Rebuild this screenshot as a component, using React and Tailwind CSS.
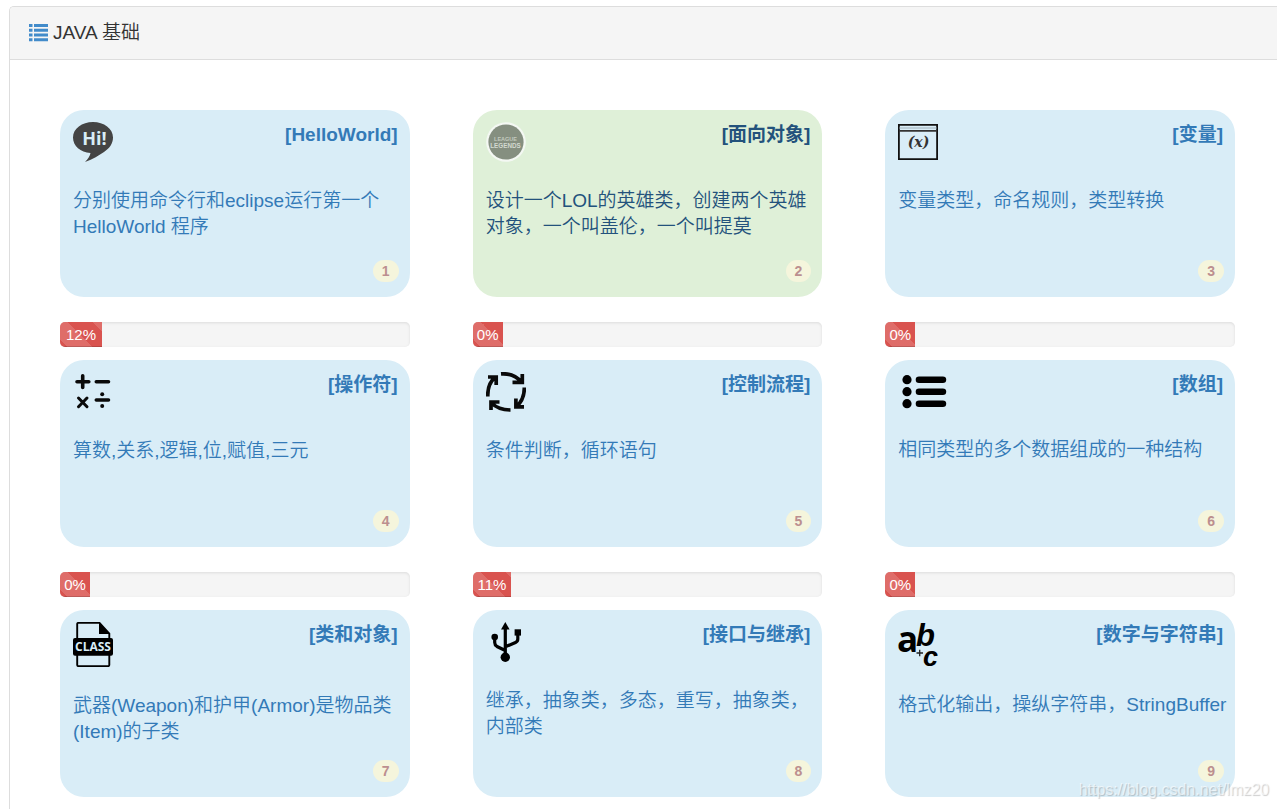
import React from 'react';
import clsx from 'clsx';

const HelloIcon = () => (
  <svg width="40" height="40" viewBox="0 0 40 40" aria-hidden="true">
    <path d="M20 0C31 0 40 6.600 40 15.500C40 21.500 36.500 26.500 31 30C26 33.500 20 37 12 40C15 37 17 34 17.500 31C7.500 30.200 0 24 0 15.500C0 6.600 9 0 20 0Z" fill="#444" />
    <text x="21.500" y="22.500" textAnchor="middle" fontFamily="Open Sans, sans-serif" fontWeight="700" fontSize="18" fill="#d9edf7">Hi!</text>
  </svg>
);

const LegendsIcon = () => (
  <svg width="40" height="40" viewBox="0 0 40 40" aria-hidden="true">
    <circle cx="20" cy="20" r="19.800" fill="#f4f8f3" />
    <circle cx="20" cy="20" r="17.600" fill="#858f80" />
    <text x="19.500" y="19" textAnchor="middle" fontFamily="Liberation Sans, sans-serif" fontWeight="700" fontSize="5.500" fill="#c3cabf">LEAGUE</text>
    <text x="19.500" y="25.500" textAnchor="middle" fontFamily="Liberation Sans, sans-serif" fontWeight="700" fontSize="6.300" fill="#d3d9d0">LEGENDS</text>
  </svg>
);

const VariableIcon = () => (
  <svg width="40" height="40" viewBox="0 0 40 40" fill="none" stroke="#111" aria-hidden="true">
    <path d="M0.900 2.900H39.100V37.200H0.900Z" strokeWidth="1.800" />
    <path d="M1 8.900H39" strokeWidth="1.800" stroke="#333" />
    <path d="M1 6H39" strokeWidth="0.800" stroke="#8fa0a8" />
    <text x="20.500" y="25" textAnchor="middle" fontFamily="DejaVu Serif, serif" fontStyle="italic" fontWeight="700" fontSize="14" fill="#333" stroke="none">(x)</text>
  </svg>
);

const OperatorIcon = () => (
  <svg width="40" height="40" viewBox="0 0 40 40" fill="none" stroke="#0a0a0a" strokeWidth="3.600" strokeLinecap="round" aria-hidden="true">
    <path d="M4 9.700H15.800M9.700 3.800V15.500M23.300 9.700H35.500M23.300 28H35.500" />
    <path d="M5.500 26L14 34.700M14 26L5.500 34.700" strokeWidth="3" />
    <circle cx="29.200" cy="22.200" r="2" fill="#0a0a0a" stroke="none" />
    <circle cx="29.200" cy="34" r="2" fill="#0a0a0a" stroke="none" />
  </svg>
);

const CycleIcon = () => (
  <svg width="40" height="40" viewBox="0 0 40 40" fill="none" stroke="#0a0a0a" strokeWidth="3.700" aria-hidden="true">
    <path d="M15 1.900C23 1.200 30 4 35.500 10M36.300 2V10.400H26.500" />
    <path d="M38.300 15.500C38.500 24 35.500 30 30.500 34.500M29.900 26.500V34.900H38" />
    <path d="M24.500 38C17 38 10 35.500 5.500 31M5 38V30H13.500" />
    <path d="M1.800 24.500C1.500 17 4 9.500 9.500 5M2 5H10.200V13" />
  </svg>
);

const ArrayIcon = () => (
  <svg width="50" height="39" viewBox="0 0 50 39" aria-hidden="true">
    <g fill="#000">
      <circle cx="9" cy="7.700" r="4.600" />
      <circle cx="9" cy="19.700" r="4.600" />
      <circle cx="9" cy="31.700" r="4.600" />
      <rect x="17.700" y="4.400" width="30.500" height="6.600" rx="3.300" />
      <rect x="17.700" y="16.400" width="30.500" height="6.600" rx="3.300" />
      <rect x="17.700" y="28.400" width="30.500" height="6.600" rx="3.300" />
    </g>
  </svg>
);

const ClassIcon = () => (
  <svg width="40" height="45" viewBox="0 0 40 45" aria-hidden="true">
    <path d="M4.200 17V2Q4.200 0.900 5.300 0.900H26.500L36.300 11.500V17M4.200 33V43Q4.200 44.100 5.300 44.100H35.200Q36.300 44.100 36.300 43V33" fill="none" stroke="#000" strokeWidth="1.900" />
    <path d="M26 0.500V12H37Z" fill="#000" />
    <rect y="16" width="40" height="17.800" rx="2" fill="#000" />
    <text x="20" y="29.200" textAnchor="middle" fontFamily="Open Sans, sans-serif" fontWeight="700" fontSize="12" fill="#d9edf7">CLASS</text>
  </svg>
);

const UsbIcon = () => (
  <svg width="40" height="40" viewBox="0 0 40 40" aria-hidden="true">
    <path d="M19.300 0L23.600 7.500H15Z" fill="#000" />
    <circle cx="19.300" cy="35.300" r="4.700" fill="#000" />
    <circle cx="8.700" cy="15" r="3.300" fill="#000" />
    <rect x="28.600" y="7.300" width="6.400" height="6.300" fill="#000" />
    <path d="M19.300 5V35M8.700 15V20.500Q8.700 23 11 24.500L19.300 28.500M31.800 13V17Q31.800 19.500 29.500 20.500L19.300 24.800" fill="none" stroke="#000" strokeWidth="3.200" />
  </svg>
);

const StringIcon = () => (
  <svg width="40" height="44" viewBox="0 0 40 44" className="overflow-visible" fontWeight="700" aria-hidden="true">
    <text x="-1" y="29.500" fontFamily="Open Sans, sans-serif" fontSize="35">a</text>
    <text x="18" y="23.500" fontFamily="Liberation Sans, sans-serif" fontStyle="italic" fontSize="31">b</text>
    <path d="M18.500 31H25M21.700 27.800V34.200" stroke="#222" strokeWidth="1.300" />
    <text x="25" y="43.500" fontFamily="Liberation Sans, sans-serif" fontStyle="italic" fontSize="27">c</text>
  </svg>
);

const TOPICS = [
  { id: 1, title: 'HelloWorld', text: '分别使用命令行和eclipse运行第一个HelloWorld 程序', icon: HelloIcon, progress: 12 },
  { id: 2, title: '面向对象', text: '设计一个LOL的英雄类，创建两个英雄对象，一个叫盖伦，一个叫提莫', icon: LegendsIcon, progress: 0, active: true },
  { id: 3, title: '变量', text: '变量类型，命名规则，类型转换', icon: VariableIcon, progress: 0 },
  { id: 4, title: '操作符', text: '算数,关系,逻辑,位,赋值,三元', icon: OperatorIcon, progress: 0 },
  { id: 5, title: '控制流程', text: '条件判断，循环语句', icon: CycleIcon, progress: 11 },
  { id: 6, title: '数组', text: '相同类型的多个数据组成的一种结构', icon: ArrayIcon, progress: 0 },
  { id: 7, title: '类和对象', text: '武器(Weapon)和护甲(Armor)是物品类(Item)的子类', icon: ClassIcon },
  { id: 8, title: '接口与继承', text: '继承，抽象类，多态，重写，抽象类，内部类', icon: UsbIcon },
  { id: 9, title: '数字与字符串', text: '格式化输出，操纵字符串，StringBuffer', icon: StringIcon },
];

const TopicCard = ({ topic }) => {
  const Icon = topic.icon;
  return (
    <a
      href={`#topic-${topic.id}`}
      className={clsx(
        'flex min-h-[187px] flex-col rounded-3xl pt-3 pb-[15px] pl-[13px]',
        topic.active ? 'bg-[#dff0d8] text-[#23527c]' : 'bg-[#d9edf7] text-[#337ab7]'
      )}
    >
      <div className="flex items-start justify-between pr-3">
        <Icon />
        <h2 className="font-bold">[{topic.title}]</h2>
      </div>
      <p className="mt-[26px] pr-[7px] font-[350]">{topic.text}</p>
      <span className="mt-auto mr-[11px] self-end rounded-xl bg-[#f5f5dc] px-[9px] text-sm leading-[22px] font-bold text-[#bc8f8f]">
        {topic.id}
      </span>
    </a>
  );
};

const ProgressBar = ({ value, label }) => (
  <div className="mt-[25px] mb-[13px] h-[25px] overflow-hidden rounded-[5px] bg-[#f5f5f5] shadow-[inset_0_1px_3px_rgba(0,0,0,0.1)]">
    <div
      role="progressbar"
      aria-label={label}
      aria-valuenow={value}
      aria-valuemin={0}
      aria-valuemax={100}
      className="h-full min-w-[30px] bg-[#d9534f] bg-[linear-gradient(45deg,rgba(255,255,255,0.15)_25%,transparent_25%,transparent_50%,rgba(255,255,255,0.15)_50%,rgba(255,255,255,0.15)_75%,transparent_75%,transparent)] bg-[length:50px_50px] bg-[position:-17px_0px] text-center text-[15px] leading-[25px] text-white shadow-[inset_0_-1px_0_rgba(0,0,0,0.15)]"
      style={{ width: `${value}%` }}
    >
      {value}%
    </div>
  </div>
);

const App = () => {
  return (
    <div className="relative flex min-h-screen flex-col bg-white pt-1.5 pl-[9px] font-['Liberation_Sans','Noto_Sans_CJK_SC',sans-serif] text-[19px] leading-[26px]">
      <section className="flex-1 rounded-tl-[5px] border-t border-l border-[#ddd]">
        <header className="flex items-center gap-[5px] rounded-tl-[4px] border-b border-[#ddd] bg-[#f5f5f5] px-[19px] py-[13px] text-[#333]">
          <svg width="19" height="18" viewBox="0 0 19 18" fill="#428bca" aria-hidden="true">
            <path d="M0 0H3.500V3H0ZM5 0H19V3H5ZM0 4.800H3.500V7.800H0ZM5 4.800H19V7.800H5ZM0 9.500H3.500V12.500H0ZM5 9.500H19V12.500H5ZM0 14.300H3.500V17.300H0ZM5 14.300H19V17.300H5Z" />
          </svg>
          <h1 className="font-[350]">JAVA 基础</h1>
        </header>
        <div className="grid grid-cols-3 gap-x-[63px] pt-[50px] pr-[42px] pb-3 pl-[50px]">
          {TOPICS.map((topic) => (
            <div key={topic.id}>
              <TopicCard topic={topic} />
              {topic.progress !== undefined && <ProgressBar value={topic.progress} label={topic.title} />}
            </div>
          ))}
        </div>
      </section>
      <span className="pointer-events-none absolute right-2 bottom-2 text-base leading-[22px] text-white/60 [text-shadow:1px_1px_1px_rgba(0,0,0,0.2)]">
        https://blog.csdn.net/lmz20
      </span>
    </div>
  );
};

export default App;
